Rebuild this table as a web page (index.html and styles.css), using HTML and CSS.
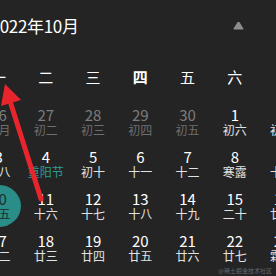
FILE: index.html
```html
<!DOCTYPE html>
<html lang="zh">
<head>
<meta charset="utf-8">
<link rel="stylesheet" href="styles.css">
</head>
<body>
<div class="panel">
  <div class="head">
    <div class="title">2022年10月</div>
    <svg class="caret" width="11" height="9" viewBox="0 0 11 9"><path d="M5.5 0.8 Q6.2 0.8 6.7 1.5 L10.4 7.4 Q10.8 8.4 9.8 8.4 L1.2 8.4 Q0.2 8.4 0.6 7.4 L4.3 1.5 Q4.8 0.8 5.5 0.8 Z" fill="#8c8c8c"/></svg>
  </div>
  <div class="weekdays">
    <span>一</span><span>二</span><span>三</span><span class="today">四</span><span>五</span><span>六</span><span>日</span>
  </div>
  <div class="days">
    <div class="day other"><b>26</b><i>九月</i></div>
    <div class="day other"><b>27</b><i>初二</i></div>
    <div class="day other"><b>28</b><i>初三</i></div>
    <div class="day other"><b>29</b><i>初四</i></div>
    <div class="day other"><b>30</b><i>初五</i></div>
    <div class="day"><b>1</b><i>初六</i></div>
    <div class="day"><b>2</b><i>初七</i></div>

    <div class="day"><b>3</b><i>初八</i></div>
    <div class="day"><b>4</b><i class="fest">重阳节</i></div>
    <div class="day"><b>5</b><i>初十</i></div>
    <div class="day"><b>6</b><i>十一</i></div>
    <div class="day"><b>7</b><i>十二</i></div>
    <div class="day"><b>8</b><i>寒露</i></div>
    <div class="day"><b>9</b><i>十四</i></div>

    <div class="day selected"><b>10</b><i>十五</i></div>
    <div class="day"><b>11</b><i>十六</i></div>
    <div class="day"><b>12</b><i>十七</i></div>
    <div class="day"><b>13</b><i>十八</i></div>
    <div class="day"><b>14</b><i>十九</i></div>
    <div class="day"><b>15</b><i>二十</i></div>
    <div class="day"><b>16</b><i>廿一</i></div>

    <div class="day"><b>17</b><i>廿二</i></div>
    <div class="day"><b>18</b><i>廿三</i></div>
    <div class="day"><b>19</b><i>廿四</i></div>
    <div class="day"><b>20</b><i>廿五</i></div>
    <div class="day"><b>21</b><i>廿六</i></div>
    <div class="day"><b>22</b><i>廿七</i></div>
    <div class="day"><b>23</b><i>霜降</i></div>
  </div>
</div>
<svg class="arrow" width="60" height="210" viewBox="0 0 60 210">
  <line x1="41" y1="199" x2="10" y2="101" stroke="#e8242c" stroke-width="5" stroke-linecap="round"/>
  <polygon points="5,84 21,100 1,106" fill="#e8242c"/>
</svg>
<div class="watermark">@稀土掘金技术社区</div>
</body>
</html>
```
FILE: styles.css
```css
html, body {
  margin: 0;
  padding: 0;
  width: 276px;
  height: 276px;
  overflow: hidden;
  background: #242424;
  font-family: "Noto Sans CJK SC", "Noto Sans", sans-serif;
  color: #ffffff;
}
body {
  position: relative;
}
.panel {
  margin-left: -25px;
  width: 331px;
}
.head {
  display: flex;
  align-items: center;
  justify-content: space-between;
  height: 50px;
  padding: 2px 62px 0 15.5px;
  box-sizing: border-box;
}
.title {
  font-size: 17px;
  line-height: 22px;
  letter-spacing: -0.3px;
}
.caret {
  display: block;
  margin-top: -2px;
}
.weekdays {
  display: grid;
  grid-template-columns: repeat(7, 47.25px);
  height: 51px;
  font-size: 15px;
  line-height: 54px;
  text-align: center;
}
.weekdays span {
  display: block;
}
.weekdays .today {
  font-weight: bold;
}
.days {
  display: grid;
  grid-template-columns: repeat(7, 47.25px);
  grid-auto-rows: 42px;
}
.day {
  display: flex;
  flex-direction: column;
  align-items: center;
  justify-content: center;
}
.day b {
  font-weight: normal;
  font-size: 15px;
  line-height: 15px;
  color: #ffffff;
}
.day i {
  font-style: normal;
  font-size: 12px;
  line-height: 14px;
  margin-top: 1px;
  color: #e2e2e2;
}
.day.other b { color: #7c7c7c; }
.day.other i { color: #6e6e6e; }
.day i.fest { color: #2a9e97; }
.day.selected {
  width: 44px;
  height: 42px;
  justify-self: center;
  border-radius: 50%;
  background: #2a8d88;
}
.day.selected b { color: #1e2e2e; }
.day.selected i { color: #1e2e2e; }
.arrow {
  position: absolute;
  left: 0;
  top: 0;
}
.watermark {
  position: absolute;
  right: 4px;
  bottom: 2px;
  font-size: 6px;
  line-height: 7px;
  color: rgba(255, 255, 255, 0.3);
}
```
